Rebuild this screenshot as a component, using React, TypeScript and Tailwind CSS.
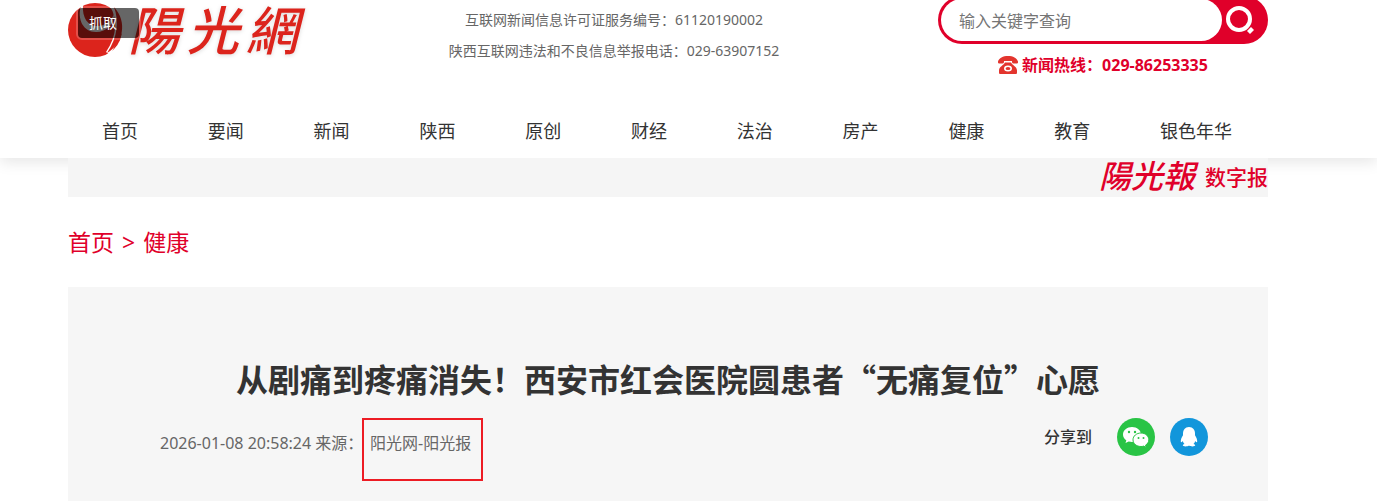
import { useState } from "react";

const navLinks = ["首页", "要闻", "新闻", "陕西", "原创", "财经", "法治", "房产", "健康", "教育", "银色年华"];

function SunLogo() {
  return (
    <svg viewBox="0 0 60 58" className="h-[58px] w-[60px] shrink-0">
      <circle cx="27" cy="30" r="27" fill="#dc241c" />
      <path d="M13 6C9 19 15 32 28 32c11 0 18-8 18-18-3 8-9 12-17 12C20 26 14 18 15 5z" fill="#fff" />
      <path d="M42 6c8 14 7 30-4 46l4 3 14-26L50 4z" fill="#fff" />
      <path d="M46 7c5 14 4 30-7 46 16-9 21-31 7-46z" fill="#dc241c" />
    </svg>
  );
}

function PhoneIcon() {
  return (
    <svg viewBox="0 0 20 18" className="h-[18px] w-5 shrink-0">
      <path d="M0 5.500C1 2 5 0 10 0s9 2 10 5.500c.2 1.200-.3 2-1.500 2h-3C14 7.500 14 6.500 14 5H6c0 1.500 0 2.500-1.500 2.500h-3C.3 7.500-.2 6.700 0 5.500z" fill="#e3352e" />
      <path d="M7 6.500h6c1.500 3 6 4 6 8v2c0 1-.5 1.500-1.500 1.500h-15C1.500 18 1 17.500 1 16.500v-2c0-4 4.500-5 6-8z" fill="#e3352e" />
      <ellipse cx="10" cy="12.500" rx="4" ry="3" fill="#fff" />
      <ellipse cx="10" cy="12.500" rx="2.400" ry="1.600" fill="#e3352e" />
    </svg>
  );
}

function SearchIcon() {
  return (
    <svg viewBox="0 0 28 28" className="h-7 w-7">
      <circle cx="13" cy="13" r="11" fill="none" stroke="#fff" strokeWidth="4" />
      <path d="M25 21l3 3-4 4-3-3z" fill="#fff" />
    </svg>
  );
}

function WechatIcon() {
  return (
    <svg viewBox="0 0 38 38" className="h-[38px] w-[38px]">
      <circle cx="19" cy="19" r="19" fill="#29c445" />
      <path d="M15 9c-5 0-9 3.200-9 7.500 0 2.500 1.300 4.500 3.300 5.800L8.500 25l3.200-1.600c1.200.3 2.200.5 3.300.5 5 0 9-3.200 9-7.400S20 9 15 9z" fill="#fff" />
      <path d="M24 15c-4.500 0-8 3-8 6.800s3.500 6.700 8 6.700c1 0 1.900-.1 2.700-.4l2.500 1.400-.7-2.300c2-1.200 3.300-3.200 3.300-5.400C31.800 18 28.500 15 24 15z" fill="#fff" stroke="#29c445" />
      <g fill="#29c445">
        <circle cx="12" cy="14" r="1.200" />
        <circle cx="18" cy="14" r="1.200" />
        <circle cx="21.500" cy="20" r="1" />
        <circle cx="26.500" cy="20" r="1" />
      </g>
    </svg>
  );
}

function QqIcon() {
  return (
    <svg viewBox="0 0 38 38" className="h-[38px] w-[38px]">
      <circle cx="19" cy="19" r="19" fill="#1296db" />
      <path d="M19 9c-4 0-6 3-6 6.500v1.700c-1.500 2.300-2.300 4.500-2.200 6.300.1 1.200.9.900 2-.6.300 1.200.9 2.200 1.700 3-1 .3-1.700.8-1.700 1.400 0 1.300 4.500 1.500 6.200.2 1.700 1.300 6.200 1.100 6.200-.2 0-.6-.7-1.100-1.700-1.400.8-.8 1.400-1.800 1.700-3 1.100 1.500 1.900 1.800 2 .6.100-1.800-.7-4-2.200-6.300v-1.700C25 12 23 9 19 9z" fill="#fff" />
    </svg>
  );
}

function Header() {
  const [keyword, setKeyword] = useState("");

  return (
    <header className="bg-white pr-[41px] shadow-[0_4px_14px_rgba(0,0,0,0.1)]">
      <div className="mx-auto flex h-[104px] max-w-[1200px] items-start">
        <div className="relative w-[234px]">
          <a href="#" className="flex items-start text-[#dc241c]">
            <SunLogo />
            <span className="flex flex-1 justify-between pr-1 font-['Liberation_Sans','Noto_Sans_CJK_TC',sans-serif] text-[52px] leading-[64px] font-medium italic drop-shadow-sm">
              <span>陽</span>
              <span>光</span>
              <span>網</span>
            </span>
          </a>
          <button
            type="button"
            className="absolute top-2 left-[10px] h-[30px] w-[61px] rounded-sm bg-black/60 pl-[11px] text-left text-sm leading-[30px] text-white outline-2 outline-white/20"
          >
            抓取
          </button>
        </div>

        <div className="flex-1 pt-1 pr-3 text-center text-sm leading-[31px] text-[#666]">
          <p>互联网新闻信息许可证服务编号：61120190002</p>
          <p>陕西互联网违法和不良信息举报电话：029-63907152</p>
        </div>

        <div className="w-[330px]">
          <form
            className="-mt-1 flex h-12 rounded-full bg-[#e0002a] p-[3px]"
            onSubmit={(e) => e.preventDefault()}
          >
            <input
              type="text"
              aria-label="输入关键字查询"
              placeholder="输入关键字查询"
              value={keyword}
              onChange={(e) => setKeyword(e.target.value)}
              className="min-w-0 flex-1 rounded-full bg-white px-[18px] pt-[2px] text-base outline-none placeholder:text-[#757575]"
            />
            <button type="submit" aria-label="搜索" className="flex w-[43px] items-center pl-1">
              <SearchIcon />
            </button>
          </form>
          <p className="mt-2 flex items-center justify-center gap-1 text-base leading-[26px] font-bold text-[#e0002a]">
            <PhoneIcon />
            新闻热线：029-86253335
          </p>
        </div>
      </div>

      <nav className="mx-auto flex h-[54px] max-w-[1200px] justify-between pr-9 pl-[34px] text-lg leading-[54px] text-[#333]">
        {navLinks.map((item) => (
          <a key={item} href="#" className="hover:text-[#e0002a]">
            {item}
          </a>
        ))}
      </nav>
    </header>
  );
}

function Article() {
  return (
    <article className="mt-6 bg-[#f6f6f6] pt-[67px] pb-5 text-[#333]">
      <h1 className="text-center font-['Noto_Sans_CJK_SC',sans-serif] text-[32px] leading-[48px] font-bold">
        从剧痛到疼痛消失！西安市红会医院圆患者“无痛复位”心愿
      </h1>
      <div className="mt-4 flex items-start justify-between pr-[60px] pl-[92px]">
        <div className="flex text-base leading-[50px] whitespace-nowrap text-[#666]">
          <span className="w-[202px]">2026-01-08 20:58:24 来源：</span>
          <span className="h-[63px] w-[121px] border-2 border-[#ed1c24] pl-[6px] leading-[46px]">阳光网-阳光报</span>
        </div>
        <div className="flex items-center gap-[15px]">
          <span className="pr-[10px] text-base font-medium">分享到</span>
          <button type="button" aria-label="微信">
            <WechatIcon />
          </button>
          <button type="button" aria-label="QQ">
            <QqIcon />
          </button>
        </div>
      </div>
    </article>
  );
}

export default function App() {
  return (
    <div className="overflow-x-hidden bg-white font-['Noto_Sans','Noto_Sans_CJK_SC',sans-serif]">
      <Header />
      <main className="relative pr-[41px]">
        <div className="mx-auto max-w-[1200px]">
          <a href="#" className="flex h-[39px] items-center justify-end gap-2 bg-[#f5f5f5] text-[#e0002a]">
            <span className="pr-[2px] font-['Liberation_Sans','Noto_Sans_CJK_TC',sans-serif] text-[32px] leading-[39px] font-medium italic">陽光報</span>
            <span className="text-[21px] font-medium">数字报</span>
          </a>
          <div className="flex h-[66px] items-end gap-2 text-[23px] leading-[42px] text-[#e0002a]">
            <a href="#">首页</a>
            <span>&gt;</span>
            <a href="#">健康</a>
          </div>
          <Article />
        </div>
      </main>
    </div>
  );
}
